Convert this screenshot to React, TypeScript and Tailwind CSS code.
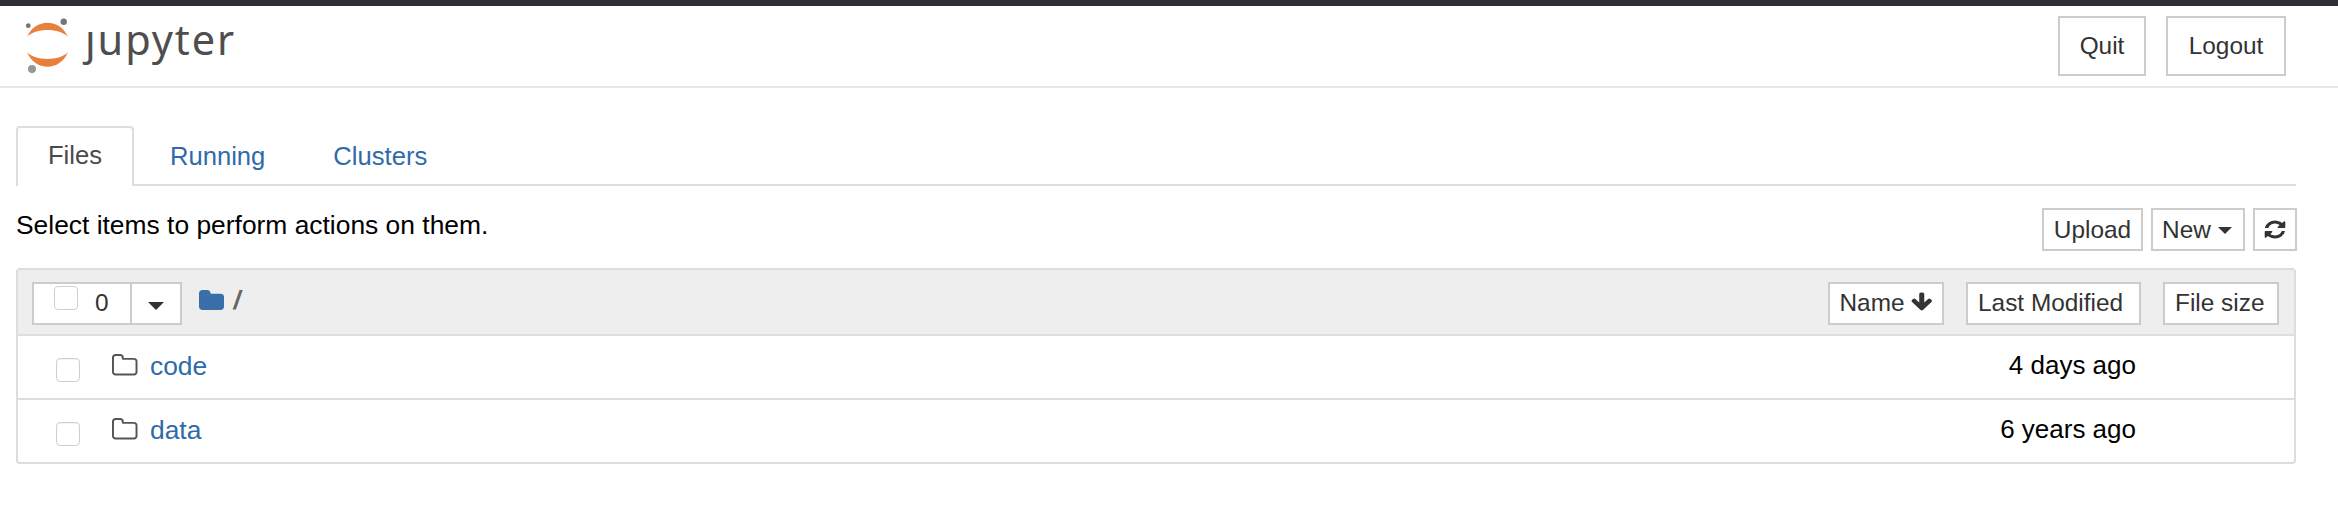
function FaIcon({ d, width, height, className = "" }: { d: string; width: number; height: number; className?: string }) {
  return (
    <svg width={width} height={height} viewBox="0 0 1792 1792" preserveAspectRatio="none" className={`shrink-0 ${className}`} fill="currentColor">
      <path d={d} />
    </svg>
  );
}

function FolderGlyph({ d, className = "" }: { d: string; className?: string }) {
  return (
    <svg viewBox="64 128 1664 1408" preserveAspectRatio="none" className={`shrink-0 ${className}`} fill="currentColor">
      <path d={d} />
    </svg>
  );
}

const FOLDER_O = "M1600 1312v-704q0-40-28-68t-68-28h-704q-40 0-68-28t-28-68v-64q0-40-28-68t-68-28h-320q-40 0-68 28t-28 68v960q0 40 28 68t68 28h1216q40 0 68-28t28-68zm128-704v704q0 92-66 158t-158 66h-1216q-92 0-158-66t-66-158v-960q0-92 66-158t158-66h320q92 0 158 66t66 158v32h672q92 0 158 66t66 158z";
const FOLDER = "M1728 608v704q0 92-66 158t-158 66h-1216q-92 0-158-66t-66-158v-960q0-92 66-158t158-66h320q92 0 158 66t66 158v32h672q92 0 158 66t66 158z";
const ARROW_DOWN = "M1675 832q0 53-37 90l-651 652q-39 37-91 37-53 0-90-37l-651-652q-38-36-38-90 0-53 38-91l74-75q39-37 91-37 53 0 90 37l294 294v-704q0-52 38-90t90-38h128q52 0 90 38t38 90v704l294-294q37-37 90-37 52 0 91 37l75 75q37 39 37 91z";
const REFRESH = "M1639 1056q0 5-1 7-64 268-268 434.5t-478 166.5q-146 0-282.5-55t-243.5-157l-129 129q-19 19-45 19t-45-19-19-45v-448q0-26 19-45t45-19h448q26 0 45 19t19 45-19 45l-137 137q71 66 161 102t187 36q134 0 250-65t186-179q11-17 53-117 8-23 30-23h192q13 0 22.5 9.5t9.5 22.5zm25-800v448q0 26-19 45t-45 19h-448q-26 0-45-19t-19-45 19-45l138-138q-148-137-349-137-134 0-250 65t-186 179q-11 17-53 117-8 23-30 23h-199q-13 0-22.5-9.5t-9.5-22.5v-7q65-268 270-434.5t480-166.5q146 0 284 55.5t245 156.5l130-129q19-19 45-19t45 19 19 45z";

function Caret({ className = "" }: { className?: string }) {
  return (
    <span
      className={`inline-block h-0 w-0 border-x-[7px] border-t-[7px] border-x-transparent border-t-[#333333] ${className}`}
    />
  );
}

function Logo() {
  return (
    <svg width="44" height="56" viewBox="0 0 44 56" className="shrink-0">
      <path d="M1 19 C9 0 34 0 42 19 C34 9.7 9 9.7 1 19 Z" fill="#e97f3d" />
      <path d="M1 34 C9 53.6 34 53.6 42 34 C34 43.3 9 43.3 1 34 Z" fill="#e97f3d" />
      <circle cx="2.3" cy="7.7" r="2.4" fill="#767677" />
      <circle cx="37.7" cy="3.7" r="3.2" fill="#767677" />
      <circle cx="6" cy="51" r="4" fill="#989798" />
    </svg>
  );
}

function Row({ name, when, divider }: { name: string; when: string; divider?: boolean }) {
  return (
    <div className={`flex items-start ${divider ? "h-[64px] border-b-2 border-[#dddddd]" : "h-[62px]"}`}>
      <span className="mt-[22px] ml-[38px] h-[24px] w-[24px] rounded-[4px] border border-[#cfcfcf] bg-white shadow-[inset_0_1px_1px_rgba(0,0,0,0.05)]" />
      <FolderGlyph d={FOLDER_O} className="mt-[18px] ml-[32px] h-[21.5px] w-[25.5px] text-[#555555]" />
      <a className="mt-[12px] ml-[12.5px] text-[26.4px] leading-[36px] text-[#2f6ba9]">{name}</a>
      <span className="mt-[11px] ml-auto mr-[158px] text-[26px] leading-[36px] text-black">{when}</span>
    </div>
  );
}

function SmallButton({ children, className = "" }: { children: React.ReactNode; className?: string }) {
  return (
    <button
      className={`flex h-[43px] items-center border-2 border-[#cccccc] bg-white text-[24.4px] leading-none text-[#333333] ${className}`}
    >
      {children}
    </button>
  );
}

export default function App() {
  return (
    <div className="min-h-[520px] w-[2338px] overflow-hidden bg-white font-['Liberation_Sans',Arial,sans-serif]">
      <div className="h-[6px] bg-[#2f3033]" />
      <header className="flex h-[82px] items-start border-b-2 border-[#e7e7e7]">
        <div className="ml-[26px] mt-[12px] flex items-start">
          <Logo />
          <span className="ml-[15px] mt-[-9px] font-['Noto_Sans',sans-serif] text-[41.5px] leading-[60px] tracking-[1.9px] text-[#4e4e4e]">
            ȷupyter
          </span>
        </div>
        <div className="ml-auto mr-[52px] mt-[10px] flex gap-[20px] text-[24.4px] text-[#333333]">
          <button className="h-[60px] w-[88px] border-2 border-[#cccccc] bg-white">Quit</button>
          <button className="h-[60px] w-[120px] border-2 border-[#cccccc] bg-white">Logout</button>
        </div>
      </header>

      <main className="ml-[16px] w-[2280px]">
        <nav className="mt-[38px] flex h-[60px] items-stretch border-b-2 border-[#dddddd] text-[25.6px]">
          <span className="z-10 mb-[-2px] flex w-[118px] items-center justify-center rounded-t-[4px] border-2 border-b-0 border-[#dddddd] bg-white pb-[3px] text-[#4a4a4a]">
            Files
          </span>
          <a className="ml-[36px] flex items-center pt-[3px] text-[#2f6ba9]">Running</a>
          <a className="ml-[68px] flex items-center pt-[3px] text-[#2f6ba9]">Clusters</a>
        </nav>

        <div className="mt-[22px] flex h-[44px] items-start">
          <span className="mt-[-1px] text-[26.4px] leading-[36px] text-black">Select items to perform actions on them.</span>
          <div className="ml-auto mr-[-1px] flex gap-[8px]">
            <SmallButton className="w-[101px] justify-center pt-[1px]">Upload</SmallButton>
            <SmallButton className="w-[94px] justify-center gap-[7px] pr-[2px] pt-[1px]">
              New <Caret />
            </SmallButton>
            <SmallButton className="w-[44px] justify-center">
              <FaIcon d={REFRESH} width={24} height={21} className="text-[#333333]" />
            </SmallButton>
          </div>
        </div>

        <section className="mt-[16px] h-[196px] overflow-hidden rounded-[4px] border-2 border-[#dddddd]">
          <div className="flex h-[66px] items-start border-b-2 border-[#dddddd] bg-[#eeeeee]">
            <div className="ml-[14px] mt-[12px] flex h-[43px] w-[150px] border-2 border-[#cccccc] bg-white">
              <div className="relative w-[98px] border-r-2 border-[#cccccc]">
                <span className="absolute left-[20px] top-[2px] h-[24px] w-[24px] rounded-[4px] border border-[#cfcfcf] bg-white" />
                <span className="absolute left-[61px] top-[1px] text-[24.4px] leading-[36px] text-[#333333]">0</span>
              </div>
              <div className="flex flex-1 items-center justify-center pt-[4px]">
                <Caret className="border-x-[8px] border-t-[8px]" />
              </div>
            </div>
            <FolderGlyph d={FOLDER} className="ml-[17px] mt-[20px] h-[20px] w-[25px] text-[#3a6ea8]" />
            <span className="ml-[10px] mt-[12px] inline-block skew-x-[-9deg] text-[26.4px] font-bold leading-[36px] text-[#666666]">/</span>
            <div className="ml-auto mr-[15px] mt-[12px] flex gap-[22px]">
              <SmallButton className="w-[116px] gap-[5px] pl-[9.5px]">
                Name <FaIcon d={ARROW_DOWN} width={23.5} height={21.6} className="mb-[4px] text-[#333333]" />
              </SmallButton>
              <SmallButton className="w-[175px] pl-[10px]">Last Modified</SmallButton>
              <SmallButton className="w-[116px] pl-[10px]">File size</SmallButton>
            </div>
          </div>
          <Row name="code" when="4 days ago" divider />
          <Row name="data" when="6 years ago" />
        </section>
      </main>
    </div>
  );
}
